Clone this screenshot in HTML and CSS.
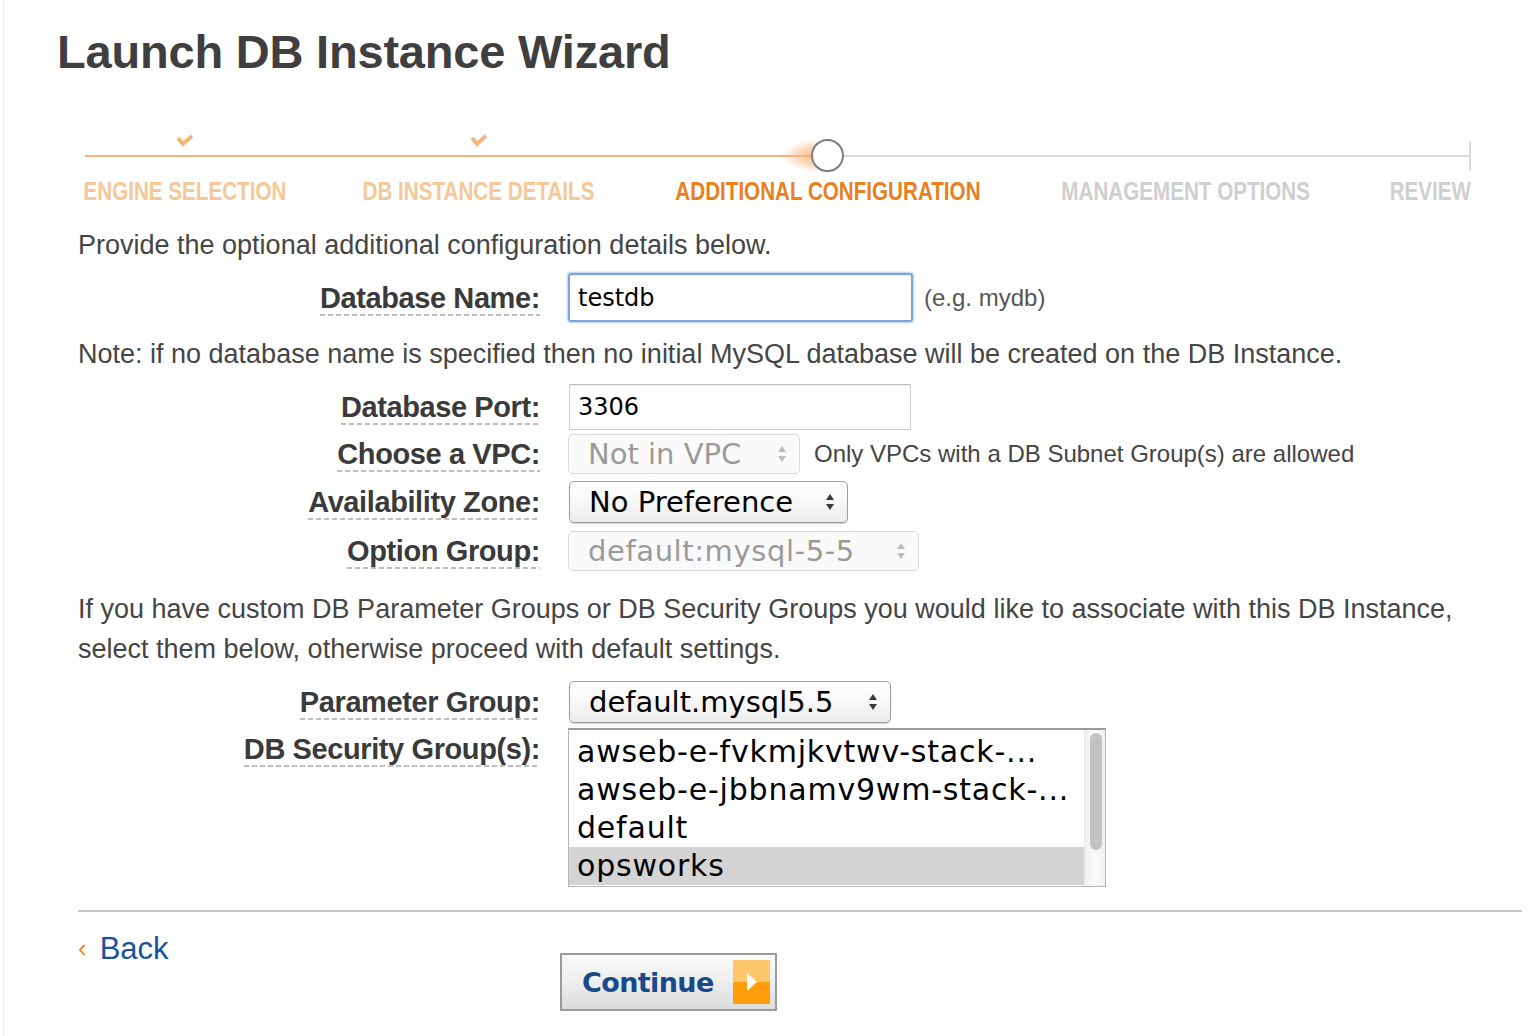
FILE: index.html
```html
<!DOCTYPE html>
<html>
<head>
<meta charset="utf-8">
<title>Launch DB Instance Wizard</title>
<link rel="stylesheet" href="styles.css">
</head>
<body>
<div class="edge"></div>
<div class="page">
  <h1 class="title">Launch DB Instance Wizard</h1>

  <div class="stepper">
    <div class="step done w-engine">
      <div class="marker">
        <svg class="check" width="18" height="14" viewBox="0 0 18 14"><path d="M2 5 L7 11 L16 3" fill="none" stroke="#f3b57a" stroke-width="4" stroke-linejoin="miter"/></svg>
      </div>
      <div class="step-label">ENGINE SELECTION</div>
    </div>
    <div class="step done w-details">
      <div class="marker">
        <svg class="check" width="18" height="14" viewBox="0 0 18 14"><path d="M2 5 L7 11 L16 3" fill="none" stroke="#f3b57a" stroke-width="4" stroke-linejoin="miter"/></svg>
      </div>
      <div class="step-label">DB INSTANCE DETAILS</div>
    </div>
    <div class="step current w-additional">
      <div class="marker"><span class="glow"></span><span class="ring"></span></div>
      <div class="step-label">ADDITIONAL CONFIGURATION</div>
    </div>
    <div class="step todo w-management">
      <div class="marker"></div>
      <div class="step-label">MANAGEMENT OPTIONS</div>
    </div>
    <div class="step todo w-review">
      <div class="marker"></div>
      <div class="step-label">REVIEW</div>
    </div>
  </div>

  <div class="content">
    <p class="text intro">Provide the optional additional configuration details below.</p>

    <div class="row row-name">
      <div class="label-cell"><span class="label">Database Name:</span></div>
      <div class="input focus">testdb</div>
      <span class="hint">(e.g. mydb)</span>
    </div>

    <p class="text note">Note: if no database name is specified then no initial MySQL database will be created on the DB Instance.</p>

    <div class="row row-port">
      <div class="label-cell"><span class="label">Database Port:</span></div>
      <div class="input plain">3306</div>
    </div>

    <div class="row row-vpc">
      <div class="label-cell"><span class="label">Choose a VPC:</span></div>
      <div class="select disabled sel-vpc"><span class="sel-text">Not in VPC</span><span class="arrows"><i class="up"></i><i class="down"></i></span></div>
      <span class="hint dark">Only VPCs with a DB Subnet Group(s) are allowed</span>
    </div>

    <div class="row row-az">
      <div class="label-cell"><span class="label">Availability Zone:</span></div>
      <div class="select sel-az"><span class="sel-text">No Preference</span><span class="arrows"><i class="up"></i><i class="down"></i></span></div>
    </div>

    <div class="row row-opt">
      <div class="label-cell"><span class="label">Option Group:</span></div>
      <div class="select disabled sel-opt"><span class="sel-text">default:mysql-5-5</span><span class="arrows"><i class="up"></i><i class="down"></i></span></div>
    </div>

    <p class="text custom">If you have custom DB Parameter Groups or DB Security Groups you would like to associate with this DB Instance, select them below, otherwise proceed with default settings.</p>

    <div class="row row-param">
      <div class="label-cell"><span class="label">Parameter Group:</span></div>
      <div class="select sel-param"><span class="sel-text">default.mysql5.5</span><span class="arrows"><i class="up"></i><i class="down"></i></span></div>
    </div>

    <div class="row row-sec">
      <div class="label-cell top"><span class="label">DB Security Group(s):</span></div>
      <div class="listbox">
        <div class="options">
          <div class="option">awseb-e-fvkmjkvtwv-stack-...</div>
          <div class="option">awseb-e-jbbnamv9wm-stack-...</div>
          <div class="option">default</div>
          <div class="option selected">opsworks</div>
        </div>
        <div class="scrollbar"><div class="thumb"></div></div>
      </div>
    </div>

    <div class="divider"></div>

    <div class="footer">
      <a class="back" href="#"><span class="chev">‹</span>Back</a>
      <button class="continue" type="button"><span class="continue-text">Continue</span><span class="go"><svg width="14" height="22" viewBox="0 0 14 22"><path d="M2 2 L12 11 L2 20 Z" fill="#fff"/></svg></span></button>
    </div>
  </div>
</div>
</body>
</html>
```

FILE: styles.css
```css
html, body {
  margin: 0;
  padding: 0;
  background: #ffffff;
}

body {
  font-family: "Liberation Sans", Arial, Helvetica, sans-serif;
  color: #444444;
  position: relative;
  min-height: 1036px;
  overflow: hidden;
}

.edge {
  position: absolute;
  left: 3px;
  top: 0;
  bottom: 0;
  width: 1px;
  background: #ececec;
}

.title {
  margin: 24px 0 0 57px;
  font-size: 47px;
  line-height: 56px;
  font-weight: bold;
  color: #3f3f3f;
  letter-spacing: -0.2px;
}

/* ---------- stepper ---------- */
.stepper {
  position: relative;
  display: flex;
  gap: 79px;
  margin: 56px 0 0 85px;
  width: 1386px;
}

.stepper::before {
  content: "";
  position: absolute;
  left: 0;
  right: 0;
  top: 19px;
  height: 2px;
  background: linear-gradient(to right, #f2b47e 0, #f2b47e 726px, #d9d9d9 726px, #d9d9d9 100%);
}

.stepper::after {
  content: "";
  position: absolute;
  right: 0;
  top: 6px;
  width: 2px;
  height: 28px;
  background: #d9d9d9;
}

.step {
  display: flex;
  flex-direction: column;
  align-items: center;
  flex: none;
}

.w-engine { width: 199px; }
.w-details { width: 232px; }
.w-additional { width: 307px; }
.w-management { width: 251px; }
.w-review { width: 81px; }

.marker {
  position: relative;
  height: 40px;
  width: 40px;
  display: flex;
  align-items: flex-start;
  justify-content: center;
}

.check {
  margin-top: -3px;
}

.ring {
  position: relative;
  box-sizing: border-box;
  width: 33px;
  height: 33px;
  margin-top: 3px;
  border-radius: 50%;
  border: 2px solid #7d7d7d;
  background: #ffffff;
  z-index: 2;
}

.glow {
  position: absolute;
  left: -28px;
  top: 3px;
  width: 52px;
  height: 34px;
  border-radius: 50%;
  background: radial-gradient(ellipse at 80% 50%, rgba(246, 165, 95, 0.85) 0, rgba(248, 185, 130, 0.55) 38%, rgba(255, 220, 190, 0) 70%);
  z-index: 1;
}

.step-label {
  font-family: "Liberation Sans", Arial, sans-serif;
  font-weight: bold;
  font-size: 25px;
  line-height: 30px;
  white-space: nowrap;
  transform: scaleX(0.825);
  transform-origin: center center;
}

.done .step-label { color: #f6c797; }
.current .step-label { color: #e8801d; }
.todo .step-label { color: #cfcfcf; }

/* ---------- content ---------- */
.content {
  padding-left: 78px;
}

.text {
  margin: 0;
  font-size: 27px;
  line-height: 40px;
  color: #454545;
}

.intro { margin-top: 19px; }

.row {
  display: flex;
  align-items: center;
}

.label-cell {
  width: 462px;
  flex: none;
  display: flex;
  justify-content: flex-end;
  margin-right: 29px;
}

.label-cell.top {
  align-self: flex-start;
  padding-top: 6px;
}

.label {
  display: block;
  font-size: 29px;
  line-height: 30px;
  font-weight: bold;
  color: #3a3a3a;
  letter-spacing: -0.4px;
  padding-bottom: 3px;
  margin-bottom: -3px;
  background: linear-gradient(to right, #bdbdbd 5px, transparent 5px) repeat-x left bottom / 8px 2px;
}

.hint {
  font-size: 24px;
  color: #555555;
  margin-left: 11px;
}

.hint.dark { color: #444444; margin-left: 14px; }

.input {
  box-sizing: border-box;
  font-family: "DejaVu Sans", sans-serif;
  font-size: 24px;
  color: #000000;
  display: flex;
  align-items: center;
  padding-left: 8px;
}

.input.focus {
  width: 345px;
  height: 49px;
  border: 2px solid #7ba7d8;
  border-radius: 3px;
  box-shadow: 0 0 2px 1px rgba(120, 165, 215, 0.55), inset 0 1px 2px rgba(0, 0, 0, 0.1);
  margin-left: -1px;
}

.input.plain {
  width: 342px;
  height: 46px;
  border: 1px solid #cfcfcf;
  border-top-color: #bdbdbd;
  box-shadow: inset 0 1px 1px rgba(0, 0, 0, 0.06);
}

.row-name { margin-top: 8px; }
.note { margin-top: 12px; }
.row-port { margin-top: 10px; }
.row-vpc { margin-top: 4px; }
.row-az { margin-top: 7px; }
.row-opt { margin-top: 8px; }
.custom { margin-top: 18px; max-width: 1400px; }
.row-param { margin-top: 12px; }
.row-sec { margin-top: 5px; }

.select {
  box-sizing: border-box;
  display: inline-flex;
  align-items: center;
  border-radius: 5px;
  font-family: "DejaVu Sans", sans-serif;
  font-size: 29px;
  padding-left: 19px;
  padding-right: 13px;
  justify-content: space-between;
}

.select:not(.disabled) {
  border: 1px solid #9d9d9d;
  background: linear-gradient(to bottom, #ffffff 0%, #f7f7f7 50%, #ececec 100%);
  box-shadow: 0 1px 1px rgba(0, 0, 0, 0.18);
  color: #000000;
}

.select.disabled {
  border: 1px solid #d9d9d9;
  background: #fafafa;
  color: #9a9a9a;
}

.sel-vpc { width: 232px; height: 40px; margin-left: -1px; }
.sel-az { width: 279px; height: 42px; }
.sel-opt { width: 351px; height: 40px; margin-left: -1px; letter-spacing: 0.6px; }
.sel-param { width: 322px; height: 42px; }

.arrows {
  display: flex;
  flex-direction: column;
  gap: 4px;
  align-items: center;
}

.arrows i {
  display: block;
  width: 0;
  height: 0;
  border-left: 4px solid transparent;
  border-right: 4px solid transparent;
}

.arrows .up { border-bottom: 6px solid #3a3a3a; }
.arrows .down { border-top: 6px solid #3a3a3a; }
.disabled .arrows .up { border-bottom-color: #bcbcbc; }
.disabled .arrows .down { border-top-color: #bcbcbc; }

.listbox {
  box-sizing: border-box;
  width: 538px;
  height: 159px;
  margin-left: -1px;
  display: flex;
  border: 1px solid #b5b5b5;
  border-top: 2px solid #9c9c9c;
  background: #ffffff;
}

.options {
  flex: 1;
  padding-top: 3px;
  font-family: "DejaVu Sans", sans-serif;
  font-size: 30px;
  letter-spacing: 0.8px;
  color: #000000;
}

.option {
  height: 38px;
  line-height: 38px;
  padding-left: 8px;
  white-space: nowrap;
}

.option.selected {
  background: #d4d4d4;
}

.scrollbar {
  width: 21px;
  border-left: 1px solid #e6e6e6;
  background: linear-gradient(to right, #f0f0f0, #fbfbfb 50%, #f0f0f0);
  padding: 3px 3px 0 5px;
  box-sizing: border-box;
}

.thumb {
  width: 12px;
  height: 117px;
  border-radius: 6px;
  background: #c2c2c2;
}

.divider {
  height: 2px;
  background: #c6c6c6;
  margin-top: 23px;
  margin-right: 8px;
}

.footer {
  display: flex;
  align-items: flex-start;
  margin-top: 19px;
}

.back {
  width: 482px;
  flex: none;
  font-size: 31px;
  line-height: 36px;
  color: #1b52a0;
  text-decoration: none;
}

.chev {
  color: #ee8a2a;
  font-size: 26px;
  margin: 0 13px 0 0;
  position: relative;
  top: -2px;
}

.continue {
  margin-top: 22px;
  box-sizing: border-box;
  width: 217px;
  height: 58px;
  border: 2px solid #9a9a9a;
  border-radius: 1px;
  background: linear-gradient(to bottom, #fbfbfb 0%, #ececec 55%, #dcdcdc 100%);
  display: flex;
  align-items: center;
  justify-content: space-between;
  padding: 0 5px 0 20px;
  cursor: pointer;
}

.continue-text {
  font-family: "DejaVu Sans", sans-serif;
  font-weight: bold;
  font-size: 27px;
  color: #17498b;
  letter-spacing: -0.6px;
}

.go {
  width: 37px;
  height: 44px;
  background: linear-gradient(to bottom, #ffc76b 0%, #ffc76b 50%, #ff9d0a 50%, #ff9d0a 100%);
  display: flex;
  align-items: center;
  justify-content: center;
}
```
